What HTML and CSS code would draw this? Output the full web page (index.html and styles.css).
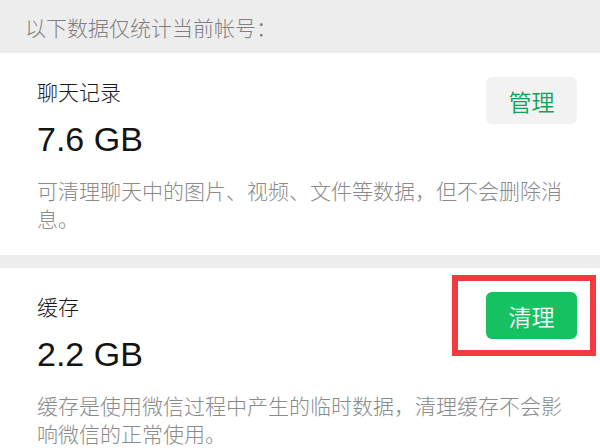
FILE: index.html
```html
<!DOCTYPE html>
<html lang="zh-CN">

<head>
    <meta charset="UTF-8">
    <meta name="viewport" content="width=device-width, initial-scale=1.0">
    <title>存储空间</title>

    <link rel="stylesheet" href="styles.css">
</head>

<body>
    <div class="aviso">以下数据仅统计当前帐号：</div>

    <div class="tarjeta">
        <div class="fila">
            <div>
                <div class="titulo">聊天记录</div>
                <div class="tamano">7.6 GB</div>
            </div>
            <button class="boton gris">管理</button>
        </div>
        <div class="texto">可清理聊天中的图片、视频、文件等数据，但不会删除消息。</div>
    </div>

    <div class="tarjeta">
        <div class="fila">
            <div>
                <div class="titulo">缓存</div>
                <div class="tamano">2.2 GB</div>
            </div>
            <div class="marcado">
                <button class="boton verde">清理</button>
                <span class="recuadro"></span>
            </div>
        </div>
        <div class="texto">缓存是使用微信过程中产生的临时数据，清理缓存不会影响微信的正常使用。</div>
    </div>
</body>

</html>
```

FILE: styles.css
```css
body, html {
    margin: 0;
    padding: 0;
    background-color: #ededed;
    font-family: "Noto Sans CJK SC", sans-serif;
    font-weight: 300;
}

.aviso {
    display: flex;
    align-items: center;
    height: 53px;
    padding-left: 25px;
    font-size: 21px;
    color: #7f7f7f;
}

.tarjeta {
    background-color: #fff;
    padding: 23px 23px 23px 37px;
}

.tarjeta + .tarjeta {
    margin-top: 13px;
}

.fila {
    display: flex;
    justify-content: space-between;
    align-items: flex-start;
}

.titulo {
    margin-top: 1px;
    font-size: 21px;
    line-height: 28px;
    color: #1a1a1a;
}

.tamano {
    margin-top: 14px;
    font-family: "Liberation Sans", "Noto Sans CJK SC", sans-serif;
    font-weight: 400;
    font-size: 34px;
    line-height: 40px;
    color: #141414;
}

.texto {
    margin-top: 17px;
    font-size: 21px;
    line-height: 28px;
    color: #8a8a8a;
}

.boton {
    width: 91px;
    height: 47px;
    margin-top: 1px;
    border: none;
    border-radius: 6px;
    padding: 0;
    font-family: "Noto Sans CJK SC", sans-serif;
    font-weight: 350;
    font-size: 23px;
}

.gris {
    background-color: #f2f2f2;
    color: #0fa35a;
}

.verde {
    background-color: #15c161;
    color: #fff;
}

.marcado {
    position: relative;
    display: flex;
}

.recuadro {
    position: absolute;
    top: -16px;
    left: -34px;
    right: -19px;
    bottom: -17px;
    border: 6px solid #f33b3d;
}
```
